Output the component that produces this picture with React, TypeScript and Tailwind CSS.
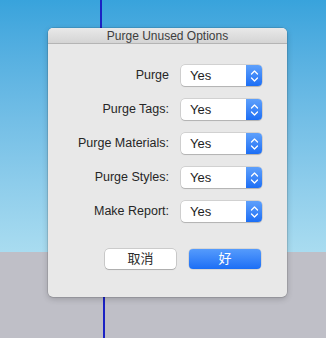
import React from 'react';

const rows = ['Purge', 'Purge Tags:', 'Purge Materials:', 'Purge Styles:', 'Make Report:'];

function Stepper() {
  return (
    <svg width="9" height="14" viewBox="0 0 9 14" fill="none" stroke="white" strokeWidth="1.3" strokeLinecap="round" strokeLinejoin="round">
      <path d="M1.5 5 L4.5 2 L7.5 5" />
      <path d="M1.5 9 L4.5 12 L7.5 9" />
    </svg>
  );
}

function Select() {
  return (
    <div className="flex h-[21px] w-[81px] rounded-[4px] bg-white shadow-[0_0_0_0.5px_rgba(0,0,0,0.2),0_1px_1px_rgba(0,0,0,0.15)] overflow-hidden">
      <span className="flex-1 pl-[9px] text-[13px] leading-[21px] text-[#1e1e1e]">Yes</span>
      <span className="flex w-[16px] items-center justify-center bg-gradient-to-b from-[#5ea0fb] to-[#1b6ef5]">
        <Stepper />
      </span>
    </div>
  );
}

export default function App() {
  return (
    <div className="relative h-[338px] w-[326px] overflow-hidden" style={{ fontFamily: '"Liberation Sans", Arial, "Noto Sans CJK SC", sans-serif' }}>
      <div className="flex h-full flex-col">
        <div className="h-[252px] bg-gradient-to-b from-[#38a3dc] to-[#a9dcf0]" />
        <div className="flex-1 bg-[#bfbfc7]" />
      </div>

      <div className="absolute left-[100px] top-0 h-[28px] w-[1.5px] bg-[#1b22c4]" />
      <div className="absolute left-[103px] top-[297px] h-[41px] w-[1.5px] bg-[#1b22c4]" />

      <div className="absolute left-[48px] top-[28px] flex h-[269px] w-[239px] flex-col overflow-hidden rounded-[5px] bg-[#e8e8e8] shadow-[0_0_0_0.5px_rgba(0,0,0,0.2),0_2px_6px_rgba(0,0,0,0.2)]">
        <div className="flex h-[16px] items-center justify-center border-b border-[#b4b4b4] bg-gradient-to-b from-[#e9e9e9] to-[#d4d4d4] text-[12px] text-[#3d3d3d]">
          Purge Unused Options
        </div>

        <div className="mt-[21px] grid grid-cols-[121px_81px] gap-x-[12px] gap-y-[13px]">
          {rows.map((r) => (
            <React.Fragment key={r}>
              <span className="text-right text-[12.5px] leading-[21px] text-[#262626]">{r}</span>
              <Select />
            </React.Fragment>
          ))}
        </div>

        <div className="mt-[27px] flex gap-[13px] pl-[57px]">
          <button className="h-[20px] w-[71px] rounded-[4px] bg-white text-[13px] text-[#2a2a2a] shadow-[0_0_0_0.5px_rgba(0,0,0,0.25),0_1px_1px_rgba(0,0,0,0.15)]">
            取消
          </button>
          <button className="h-[20px] w-[72px] rounded-[4px] bg-gradient-to-b from-[#559bfc] to-[#1b6ef5] text-[13px] text-white shadow-[0_0_0_0.5px_rgba(0,0,0,0.15)]">
            好
          </button>
        </div>
      </div>
    </div>
  );
}
